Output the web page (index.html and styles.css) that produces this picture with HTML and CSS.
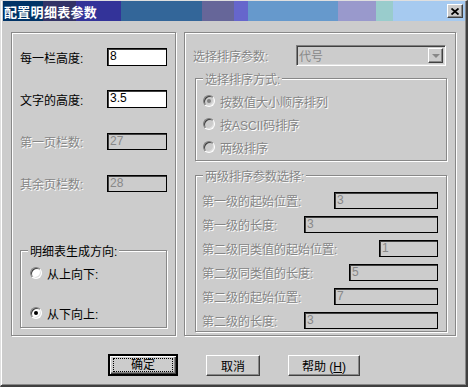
FILE: index.html
```html
<!DOCTYPE html>
<html lang="zh-CN">
<head>
    <meta charset="UTF-8">
    <title>配置明细表参数</title>
    <link rel="stylesheet" href="styles.css">
</head>
<body>
    <div class="window">
        <div class="titlebar">
            <span class="title">配置明细表参数</span>
            <span class="close-btn">
                <svg width="8" height="7" viewBox="0 0 8 7"><path d="M0.5 0.5 L7.5 6.5 M7.5 0.5 L0.5 6.5" stroke="#000" stroke-width="1.8"/></svg>
            </span>
        </div>

        <div class="panels">
            <div class="panel panel-left">
                <div class="field-row">
                    <span class="lbl">每一栏高度:</span>
                    <span class="edit">8</span>
                </div>
                <div class="field-row">
                    <span class="lbl">文字的高度:</span>
                    <span class="edit">3.5</span>
                </div>
                <div class="field-row">
                    <span class="lbl disabled">第一页栏数:</span>
                    <span class="edit off">27</span>
                </div>
                <div class="field-row">
                    <span class="lbl disabled">其余页栏数:</span>
                    <span class="edit off">28</span>
                </div>

                <div class="group group-dir">
                    <span class="legend">明细表生成方向:</span>
                    <div class="radio-row">
                        <span class="radio"></span>
                        <span>从上向下:</span>
                    </div>
                    <div class="radio-row">
                        <span class="radio checked"></span>
                        <span>从下向上:</span>
                    </div>
                </div>
            </div>

            <div class="panel panel-right">
                <div class="combo-row">
                    <span class="lbl disabled">选择排序参数:</span>
                    <span class="combo">
                        <span class="combo-text">代号</span>
                        <span class="combo-btn"><span class="arrow"></span></span>
                    </span>
                </div>

                <div class="group group-sort">
                    <span class="legend disabled">选择排序方式:</span>
                    <div class="radio-row off">
                        <span class="radio checked"></span>
                        <span class="disabled">按数值大小顺序排列</span>
                    </div>
                    <div class="radio-row off">
                        <span class="radio"></span>
                        <span class="disabled">按ASCII码排序</span>
                    </div>
                    <div class="radio-row off">
                        <span class="radio"></span>
                        <span class="disabled">两级排序</span>
                    </div>
                </div>

                <div class="group group-two">
                    <span class="legend disabled">两级排序参数选择:</span>
                    <div class="param-row">
                        <span class="disabled">第一级的起始位置:</span>
                        <span class="edit off" style="width: 104px">3</span>
                    </div>
                    <div class="param-row">
                        <span class="disabled">第一级的长度:</span>
                        <span class="edit off" style="width: 134px">3</span>
                    </div>
                    <div class="param-row">
                        <span class="disabled">第二级同类值的起始位置:</span>
                        <span class="edit off" style="width: 59px">1</span>
                    </div>
                    <div class="param-row">
                        <span class="disabled">第二级同类值的长度:</span>
                        <span class="edit off" style="width: 89px">5</span>
                    </div>
                    <div class="param-row">
                        <span class="disabled">第二级的起始位置:</span>
                        <span class="edit off" style="width: 104px">7</span>
                    </div>
                    <div class="param-row">
                        <span class="disabled">第二级的长度:</span>
                        <span class="edit off" style="width: 134px">3</span>
                    </div>
                </div>
            </div>
        </div>

        <div class="buttons">
            <button class="btn btn-default"><span class="focus">确定</span></button>
            <button class="btn btn-cancel">取消</button>
            <button class="btn btn-help">帮助 (<u>H</u>)</button>
        </div>
    </div>
</body>
</html>
```

FILE: styles.css
```css
body {
    margin: 0;
    background-color: #cccccc;
    color: #000000;
    font-family: "Liberation Sans", "Noto Sans CJK SC", sans-serif;
    font-size: 12px;
}
.window {
    width: 468px;
    height: 387px;
    box-sizing: border-box;
    background-color: #cccccc;
    border-top: 1px solid #dfdfdf;
    border-left: 1px solid #dfdfdf;
    border-right: 2px solid #404040;
    border-bottom: 2px solid #404040;
    box-shadow: inset 1px 0 #ffffff, inset -1px -1px #888888;
    padding: 0 1px 0 2px;
}
.titlebar {
    height: 20px;
    display: flex;
    align-items: center;
    justify-content: space-between;
    padding: 0 2px 0 1px;
    background: linear-gradient(to right,
        #003366 0 40px, #333366 40px 73px, #333399 73px 118px,
        #336699 118px 199px, #666699 199px 231px, #6666cc 231px 245px,
        #6699cc 245px 335px, #9999cc 335px 373px, #99cccc 373px 390px,
        #a6caf0 390px);
}
.title {
    color: #ffffff;
    font-weight: bold;
    font-size: 13px;
    letter-spacing: 0.3px;
}
.close-btn {
    width: 16px;
    height: 14px;
    box-sizing: border-box;
    display: flex;
    align-items: center;
    justify-content: center;
    background-color: #cccccc;
    border-top: 1px solid #ffffff;
    border-left: 1px solid #ffffff;
    border-right: 1px solid #404040;
    border-bottom: 1px solid #404040;
    box-shadow: inset -1px -1px #888888;
}

.panels {
    display: flex;
    gap: 8px;
    margin: 11px 0 0 8px;
}
.panel, .group {
    box-sizing: border-box;
    border: 1px solid #888888;
    box-shadow: inset 1px 1px #ffffff, 1px 1px #ffffff;
}
.panel {
    height: 304px;
    display: flex;
    flex-direction: column;
}
.panel-left {
    width: 165px;
    padding: 15px 8px 0 8px;
    gap: 24px;
}
.panel-right {
    width: 272px;
    padding: 12px 0 0 7px;
}

.field-row {
    display: flex;
    align-items: center;
    height: 18px;
}
.lbl {
    width: 87px;
    flex-shrink: 0;
}
.disabled {
    color: #868686;
    text-shadow: 1px 1px #ffffff;
}
.edit {
    box-sizing: border-box;
    width: 60px;
    height: 18px;
    line-height: 15px;
    padding-left: 2px;
    background-color: #ffffff;
    border: 1px solid #000000;
    box-shadow: inset 1px 1px #404040;
}
.edit.off {
    background-color: #cccccc;
    color: #888888;
    height: 17px;
}

.group {
    position: relative;
    display: flex;
    flex-direction: column;
}
.legend {
    position: absolute;
    top: -9px;
    left: 7px;
    padding: 0 2px;
    background-color: #cccccc;
}
.group-dir {
    width: 147px;
    height: 78px;
    margin-top: 34px;
    padding: 14px 0 0 9px;
    gap: 24px;
}
.radio-row {
    display: flex;
    align-items: center;
    gap: 5px;
    height: 16px;
}
.radio {
    position: relative;
    width: 12px;
    height: 12px;
    box-sizing: border-box;
    border-radius: 50%;
    background-color: #ffffff;
    border: 1px solid;
    border-color: #808080 #ffffff #ffffff #808080;
    box-shadow: inset 1px 1px #404040, inset -1px -1px #dfdfdf;
}
.radio.checked::after {
    content: "";
    position: absolute;
    left: 3px;
    top: 3px;
    width: 4px;
    height: 4px;
    border-radius: 50%;
    background-color: #000000;
}
.radio-row.off .radio {
    background-color: #cccccc;
}
.radio-row.off .radio.checked::after {
    background-color: #808080;
}

.combo-row {
    display: flex;
    align-items: center;
    height: 21px;
}
.combo-row .lbl {
    width: 103px;
    padding-left: 1px;
}
.combo {
    box-sizing: border-box;
    width: 150px;
    height: 21px;
    display: flex;
    align-items: center;
    justify-content: space-between;
    padding: 0 2px 0 2px;
    border: 1px solid;
    border-color: #808080 #ffffff #ffffff #808080;
    box-shadow: inset 1px 1px #404040, inset -1px -1px #dfdfdf;
}
.combo-text {
    color: #888888;
}
.combo-btn {
    box-sizing: border-box;
    width: 15px;
    height: 15px;
    display: flex;
    align-items: center;
    justify-content: center;
    border: 1px solid;
    border-color: #ffffff #404040 #404040 #ffffff;
    box-shadow: inset -1px -1px #888888;
}
.arrow {
    width: 0;
    height: 0;
    border-left: 4px solid transparent;
    border-right: 4px solid transparent;
    border-top: 4px solid #888888;
}

.group-sort {
    width: 252px;
    height: 83px;
    margin: 12px 0 0 3px;
    padding: 14px 0 0 7px;
    gap: 7px;
}
.group-two {
    width: 252px;
    height: 157px;
    margin: 14px 0 0 3px;
    padding: 16px 8px 0 6px;
    gap: 7px;
}
.param-row {
    display: flex;
    align-items: center;
    justify-content: space-between;
    height: 17px;
}

.buttons {
    display: flex;
    align-items: center;
    gap: 28px;
    margin: 18px 0 0 105px;
}
.btn {
    box-sizing: border-box;
    height: 21px;
    padding: 0;
    font: inherit;
    color: #000000;
    background-color: #cccccc;
    border: 1px solid;
    border-color: #ffffff #404040 #404040 #ffffff;
    box-shadow: inset -1px -1px #888888;
}
.btn-default {
    width: 70px;
    height: 22px;
    outline: 1px solid #000000;
    outline-offset: -1px;
    border-width: 2px 2px 2px 2px;
    border-color: #000000;
    box-shadow: inset 1px 1px #ffffff, inset -1px -1px #404040, inset -2px -2px #888888;
}
.focus {
    display: block;
    margin: 2px 3px;
    line-height: 12px;
    border: 1px dotted #000000;
}
.btn-cancel {
    width: 54px;
}
.btn-help {
    width: 72px;
}
```
